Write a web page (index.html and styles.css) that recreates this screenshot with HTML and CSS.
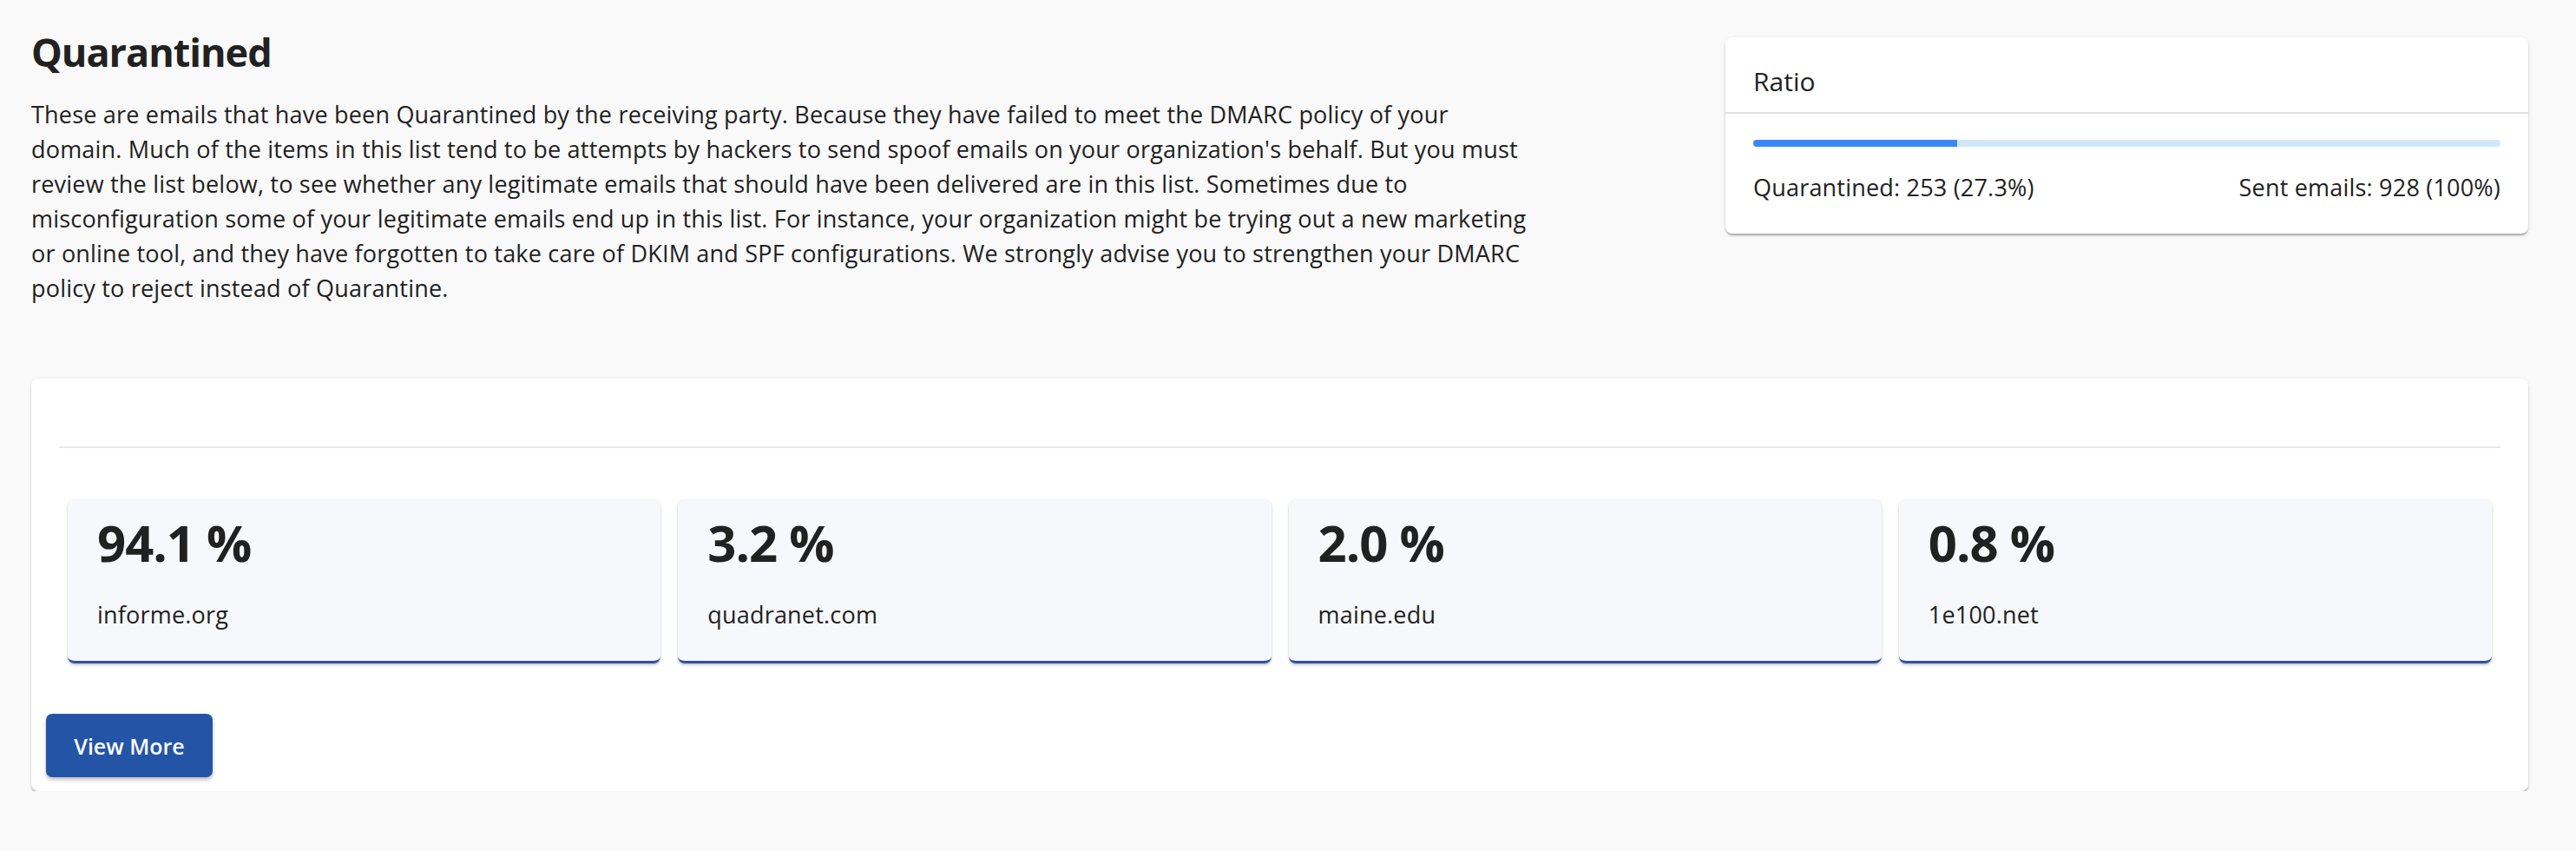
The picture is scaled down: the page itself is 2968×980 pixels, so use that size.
FILE: index.html
```html
<!DOCTYPE html>
<html lang="en">
<head>
<meta charset="utf-8">
<title>Quarantined</title>
<link rel="stylesheet" href="styles.css">
</head>
<body>
<div class="page">
  <section class="top">
    <div class="intro">
      <h1 class="title">Quarantined</h1>
      <p class="desc">These are emails that have been Quarantined by the receiving party. Because they have failed to meet the DMARC policy of your domain. Much of the items in this list tend to be attempts by hackers to send spoof emails on your organization's behalf. But you must review the list below, to see whether any legitimate emails that should have been delivered are in this list. Sometimes due to misconfiguration some of your legitimate emails end up in this list. For instance, your organization might be trying out a new marketing or online tool, and they have forgotten to take care of DKIM and SPF configurations. We strongly advise you to strengthen your DMARC policy to reject instead of Quarantine.</p>
    </div>
    <div class="ratio-card">
      <div class="ratio-head">Ratio</div>
      <div class="ratio-body">
        <div class="bar"><div class="bar-fill" style="width: 27.3%"></div></div>
        <div class="ratio-labels">
          <span>Quarantined: 253 (27.3%)</span>
          <span>Sent emails: 928 (100%)</span>
        </div>
      </div>
    </div>
  </section>

  <section class="main-card">
    <div class="main-head"></div>
    <div class="stats">
      <div class="stat"><div class="stat-value">94.1 %</div><div class="stat-label">informe.org</div></div>
      <div class="stat"><div class="stat-value">3.2 %</div><div class="stat-label">quadranet.com</div></div>
      <div class="stat"><div class="stat-value">2.0 %</div><div class="stat-label">maine.edu</div></div>
      <div class="stat"><div class="stat-value">0.8 %</div><div class="stat-label">1e100.net</div></div>
    </div>
    <div class="main-foot">
      <button class="btn">View More</button>
    </div>
  </section>
</div>
</body>
</html>
```

FILE: styles.css
```css
* { box-sizing: border-box; }
html, body {
  margin: 0;
  background: #f9f9f9;
}
body {
  font-family: "Open Sans", "Noto Sans", "Liberation Sans", sans-serif;
  color: #212121;
}
.page {
  padding: 0 55px 0 36px;
}
.top {
  display: flex;
  justify-content: space-between;
  align-items: flex-start;
}
.intro {
  width: 1730px;
}
.title {
  margin: 30px 0 0;
  font-size: 45px;
  line-height: 60px;
  font-weight: 700;
  letter-spacing: -1px;
}
.desc {
  margin: 22px 0 0;
  font-size: 27px;
  line-height: 40px;
  letter-spacing: 0.2px;
}
.ratio-card {
  margin-top: 43px;
  width: 925px;
  background: #fff;
  border-radius: 8px;
  box-shadow: 0 3px 3px -1px rgba(0,0,0,.2), 0 2px 2px rgba(0,0,0,.12), 0 1px 5px rgba(0,0,0,.08);
}
.ratio-head {
  height: 88px;
  display: flex;
  align-items: center;
  padding: 14px 32px 0;
  font-size: 30px;
  border-bottom: 2px solid #e0e0e0;
}
.ratio-body {
  padding: 30px 32px 33px;
}
.bar {
  height: 8px;
  border-radius: 4px;
  background: #d2e6fb;
  overflow: hidden;
}
.bar-fill {
  height: 100%;
  background: #3b88f5;
}
.ratio-labels {
  margin-top: 27px;
  display: flex;
  justify-content: space-between;
  font-size: 27px;
  line-height: 40px;
  letter-spacing: 0.2px;
}
.main-card {
  margin-top: 84px;
  background: #fff;
  border-radius: 8px;
  box-shadow: 0 3px 3px -1px rgba(0,0,0,.2), 0 2px 2px rgba(0,0,0,.12), 0 1px 5px rgba(0,0,0,.08);
  padding: 0 0 16px;
}
.main-head {
  height: 80px;
  margin: 0 32px;
  border-bottom: 2px solid #e8e8e8;
}
.stats {
  display: grid;
  grid-template-columns: repeat(4, 1fr);
  gap: 20px;
  padding: 59px 42px 0;
}
.stat {
  height: 189px;
  background: #f6f8fb;
  border-radius: 8px;
  border-bottom: 3px solid #2f51a1;
  box-shadow: 0 2px 3px rgba(0,0,0,.22), 0 0 2px rgba(0,0,0,.06);
  padding: 20px 34px 0;
}
.stat-value {
  font-size: 58px;
  line-height: 60px;
  font-weight: 700;
  letter-spacing: -1px;
}
.stat-label {
  margin-top: 33px;
  font-size: 27px;
  line-height: 40px;
  letter-spacing: 0.2px;
}
.main-foot {
  padding: 58px 17px 0;
}
.btn {
  display: block;
  width: 192px;
  height: 73px;
  border: 0;
  border-radius: 7px;
  background: #2454a6;
  color: #fff;
  font-family: "Open Sans", "Noto Sans", sans-serif;
  font-size: 25px;
  font-weight: 600;
  box-shadow: 0 3px 4px rgba(0,0,0,.25);
  padding: 0;
}
```
